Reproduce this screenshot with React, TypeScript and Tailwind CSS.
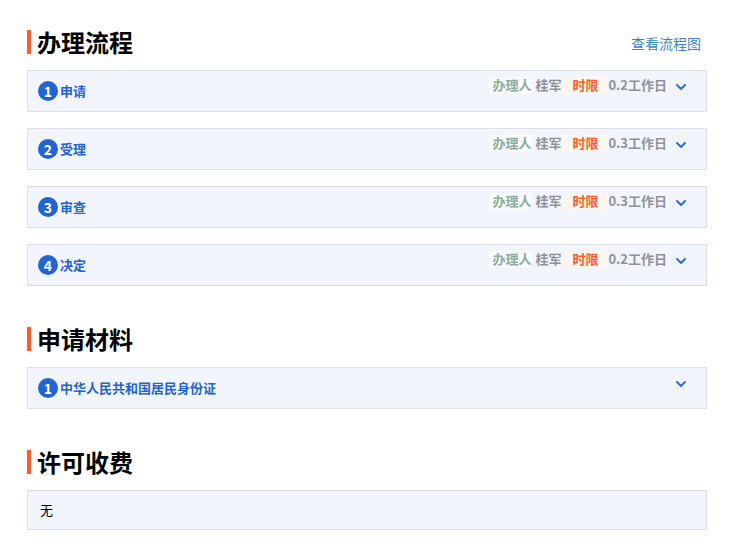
import { ChevronDown } from 'lucide-react';

const font = { fontFamily: '"Noto Sans CJK SC", "Liberation Sans", sans-serif' };

const steps = [
    { name: '申请', time: '0.2工作日' },
    { name: '受理', time: '0.3工作日' },
    { name: '审查', time: '0.3工作日' },
    { name: '决定', time: '0.2工作日' },
];

const Heading = ({ title, link }: { title: string; link?: string }) => (
    <div className="flex items-center justify-between h-6">
        <h2 className="border-l-4 border-[#ff5d24] pl-[6px] text-2xl leading-6 font-bold text-black">{title}</h2>
        {link && <a className="mr-[6px] mt-[1px] text-sm leading-6 text-[#3a86c4]">{link}</a>}
    </div>
);

const Badge = ({ n }: { n: number }) => (
    <span className="w-5 h-5 rounded-full bg-[#2364d2] text-white text-sm font-bold leading-5 text-center shrink-0">{n}</span>
);

const Row = ({ n, name, time }: { n: number; name: string; time: string }) => (
    <div className="flex h-[42px] border border-[#dcdfe8] bg-[#f2f5fc] pl-[10px] pr-[17px]">
        <div className="flex items-center gap-[2px] flex-1">
            <Badge n={n} />
            <span className="text-[13px] font-bold text-[#2364d2]">{name}</span>
        </div>
        {time && (
            <div className="flex items-start pt-[6px] h-full text-[13px] leading-4 font-bold">
                <span className="bg-[#f8fbf9] pl-[3px] pr-[1px] pb-[1px] text-[#8fab9c]">办理人</span>
                <span className="ml-[3px] text-[#8e9199]">桂军</span>
                <span className="ml-[1px] bg-[#fff5f1] px-[10px] pb-[1px] text-[#ff5d24]">时限</span>
                <span className="text-[#8e9199]">{time}</span>
                <ChevronDown size={16} strokeWidth={3} className="ml-[6px] mt-[2px] text-[#2f6fe0]" />
            </div>
        )}
        {!time && <ChevronDown size={16} strokeWidth={3} className="mt-[8px] text-[#2f6fe0]" />}
    </div>
);

export default function App() {
    return (
        <div className="w-[746px] h-[560px] bg-white overflow-hidden pt-[30px] pl-[27px] pr-[39px]" style={font}>
            <Heading title="办理流程" link="查看流程图" />
            <div className="mt-4 flex flex-col gap-4">
                {steps.map((s, i) => (
                    <Row key={s.name} n={i + 1} name={s.name} time={s.time} />
                ))}
            </div>

            <div className="mt-[41px]">
                <Heading title="申请材料" />
            </div>
            <div className="mt-4">
                <Row n={1} name="中华人民共和国居民身份证" time="" />
            </div>

            <div className="mt-[41px]">
                <Heading title="许可收费" />
            </div>
            <div className="mt-4 h-10 border border-[#dcdfe8] bg-[#f2f5fc] pl-3 pb-[1px] flex items-center text-[13px] text-black">无</div>
        </div>
    );
}
